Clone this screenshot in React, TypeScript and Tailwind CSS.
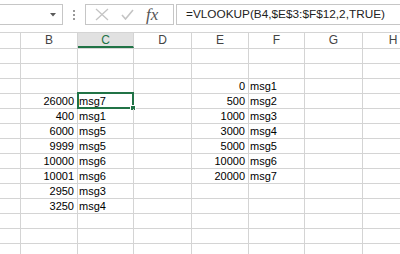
import React from 'react';

const COLS = [
  { key: 'A', w: 'w-[21px]' },
  { key: 'B', w: 'w-[57px]' },
  { key: 'C', w: 'w-[56px]' },
  { key: 'D', w: 'w-[58px]' },
  { key: 'E', w: 'w-[57px]' },
  { key: 'F', w: 'w-[56px]' },
  { key: 'G', w: 'w-[58px]' },
  { key: 'H', w: 'w-[60px]' },
];

// cell values by row number (1-based) and column letter
const DATA: Record<number, Record<string, string>> = {
  3: { E: '0', F: 'msg1' },
  4: { B: '26000', C: 'msg7', E: '500', F: 'msg2' },
  5: { B: '400', C: 'msg1', E: '1000', F: 'msg3' },
  6: { B: '6000', C: 'msg5', E: '3000', F: 'msg4' },
  7: { B: '9999', C: 'msg5', E: '5000', F: 'msg5' },
  8: { B: '10000', C: 'msg6', E: '10000', F: 'msg6' },
  9: { B: '10001', C: 'msg6', E: '20000', F: 'msg7' },
  10: { B: '2950', C: 'msg3' },
  11: { B: '3250', C: 'msg4' },
};

const NUMERIC = ['B', 'E'];

const Toolbar: React.FC = () => (
  <div className="h-[32px] flex items-start pt-[4px]">
    <div className="w-[63px] h-[21px] border border-l-0 border-[#c6c6c6] bg-white flex items-center justify-end pr-[6px]">
      <svg width="6" height="4" viewBox="0 0 6 4"><path d="M0 0h6L3 3.5z" fill="#5a5a5a" /></svg>
    </div>
    <div className="ml-[10px] mt-[6px] flex flex-col gap-[2px]">
      <span className="w-[2px] h-[2px] bg-[#9a9a9a]" />
      <span className="w-[2px] h-[2px] bg-[#9a9a9a]" />
      <span className="w-[2px] h-[2px] bg-[#9a9a9a]" />
    </div>
    <div className="ml-[10px] w-[89px] h-[21px] border border-[#c6c6c6] bg-white flex items-center">
      <svg className="ml-[9px]" width="14" height="13" viewBox="0 0 14 13">
        <path d="M1 1l12 11M13 1L1 12" stroke="#c4c4c4" strokeWidth="1.3" fill="none" />
      </svg>
      <svg className="ml-[12px]" width="13" height="11" viewBox="0 0 13 11">
        <path d="M1 6l3.5 4L12 1" stroke="#c4c4c4" strokeWidth="1.6" fill="none" />
      </svg>
      <span className="ml-[12px] font-['Liberation_Serif',serif] italic text-[17px] leading-[16px] text-[#555]">
        fx
      </span>
    </div>
    <div className="ml-[2px] flex-1 h-[21px] border border-r-0 border-[#c6c6c6] bg-white pl-[9px] text-[11.8px] leading-[19px] text-[#222] whitespace-nowrap overflow-hidden">
      =VLOOKUP(B4,$E$3:$F$12,2,TRUE)
    </div>
  </div>
);

const HeaderRow: React.FC = () => (
  <div className="flex h-[17px] border-t border-b border-[#d4d4d4]">
    {COLS.map(c => {
      const sel = c.key === 'C';
      return (
        <div
          key={c.key}
          className={
            'shrink-0 h-[15px] flex justify-center text-[12px] leading-[14px] ' +
            c.w +
            (c.key === 'H' ? '' : ' border-r border-[#d4d4d4]') +
            (sel ? ' bg-[#e1e1e1] text-[#217346] border-b-2 border-b-[#217346]' : ' text-[#444]')
          }
        >
          {c.key === 'A' ? '' : c.key}
        </div>
      );
    })}
  </div>
);

const Row: React.FC<{ n: number }> = ({ n }) => {
  const values = DATA[n] || {};
  return (
    <div className="flex h-[15px] border-b border-[#d4d4d4]">
      {COLS.map(c => {
        const v = values[c.key];
        const right = NUMERIC.includes(c.key);
        const selected = n === 4 && c.key === 'C';
        return (
          <div
            key={c.key}
            className={
              'relative shrink-0 h-[14px] text-[11px] leading-[14px] text-black whitespace-nowrap ' +
              c.w +
              (c.key === 'H' ? '' : ' border-r border-[#d4d4d4]') +
              (right ? ' text-right pr-[3px]' : ' pl-[1px]')
            }
          >
            {v}
            {selected && (
              <>
                <div className="absolute -left-[1px] -top-[2px] -right-[1px] -bottom-[1px] border-2 border-[#217346]" />
                <div className="absolute -right-[3px] -bottom-[3px] w-[6px] h-[6px] bg-[#217346] border border-white" />
              </>
            )}
          </div>
        );
      })}
    </div>
  );
};

const App: React.FC = () => {
  const rows = Array.from({ length: 14 }, (_, i) => i + 1);
  return (
    <div className="w-[400px] h-[254px] overflow-hidden bg-white font-['Liberation_Sans',Arial,sans-serif]">
      <Toolbar />
      <HeaderRow />
      {rows.map(n => (
        <Row key={n} n={n} />
      ))}
    </div>
  );
};

export default App;
